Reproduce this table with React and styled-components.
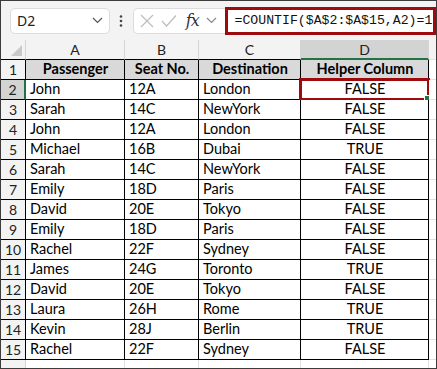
import React from 'react';
import styled, { createGlobalStyle } from 'styled-components';

const Global = createGlobalStyle`
  html, body { margin: 0; padding: 0; background: #fff; overflow: hidden; }
  * { box-sizing: border-box; }
`;

const GREEN = '#217346';
const RED = '#9e0b0f';
const CELL_FONT = `Lato, "Open Sans", sans-serif`;

const Frame = styled.div`
  width: 437px;
  height: 369px;
  border: 1px solid #3c3c3c;
  overflow: hidden;
  background: #fff;
  display: flex;
  flex-direction: column;
`;

const Toolbar = styled.div`
  height: 39px;
  flex: none;
  background: #f3f3f3;
  display: flex;
  align-items: center;
  padding-left: 9px;
`;

const NameBox = styled.div`
  width: 100px;
  height: 26px;
  background: #fff;
  border: 1px solid #dcdcdc;
  border-radius: 5px;
  display: flex;
  align-items: center;
  justify-content: space-between;
  padding: 0 6px 0 6px;
  font-family: "Noto Sans", sans-serif;
  font-size: 14px;
  color: #222;
`;

const Dots = styled.div`
  width: 23px;
  display: flex;
  justify-content: center;
  color: #444;
`;

const FormulaIcons = styled.div`
  width: 92px;
  height: 26px;
  background: #fff;
  border: 1px solid #dcdcdc;
  border-right: none;
  border-radius: 5px 0 0 5px;
  display: flex;
  align-items: center;
  padding-left: 6px;
  gap: 7px;
`;

const Fx = styled.span`
  font-family: "DejaVu Serif", "Liberation Serif", serif;
  font-style: italic;
  font-size: 16px;
  color: #333;
  letter-spacing: -1px;
  margin-left: 2px;
`;

const FormulaInput = styled.div`
  width: 212px;
  height: 28px;
  border: 3px solid ${RED};
  background: #fff;
  display: flex;
  align-items: center;
  padding-left: 7px;
  font-family: "Liberation Mono", monospace;
  font-size: 13.2px;
  color: #111;
  white-space: nowrap;
  overflow: hidden;
`;

const Sheet = styled.div`
  display: grid;
  grid-template-columns: 25px 99px 74px 102px 128px 1fr;
  grid-auto-rows: 20px;
  flex: 1;
`;

const Cell = styled.div`
  position: relative;
  border-right: 1px solid ${p => p.$rColor || '#000'};
  border-bottom: 1px solid ${p => p.$bColor || '#000'};
  background: ${p => p.$bg || '#fff'};
  font-family: ${CELL_FONT};
  font-size: 14.5px;
  font-weight: ${p => (p.$bold ? 700 : 400)};
  color: #000;
  display: flex;
  align-items: flex-end;
  padding: 0 3px 1px 4px;
  justify-content: ${p => (p.$center ? 'center' : 'flex-start')};
  white-space: nowrap;
  overflow: visible;
  line-height: 18px;
`;

const HeadCell = styled(Cell)`
  background: ${p => (p.$sel ? '#d3d3d3' : '#f3f3f3')};
  justify-content: center;
  align-items: center;
  padding: 0;
  color: #222;
  font-size: 14px;
  line-height: 20px;
`;

const ColHead = styled(HeadCell)`
  border-right-color: #d4d4d4;
  border-bottom: ${p => (p.$sel ? `2px solid ${GREEN}` : `1px solid ${p.$bColor || '#000'}`)};
  padding-top: ${p => (p.$sel ? '1px' : '0')};
`;

const RowHead = styled(HeadCell)`
  border-right: ${p => (p.$sel ? `2px solid ${GREEN}` : `1px solid ${p.$rColor || '#000'}`)};
  border-bottom-color: ${p => p.$bColor || '#000'};
`;

const Corner = styled(HeadCell)`
  border-right-color: #d4d4d4;
  &::after {
    content: '';
    position: absolute;
    right: 3px;
    bottom: 3px;
    width: 0;
    height: 0;
    border-left: 11px solid transparent;
    border-bottom: 11px solid #cacaca;
  }
`;

const Selection = styled.div`
  position: absolute;
  left: -2px;
  top: -2px;
  right: -2px;
  bottom: -2px;
  border: 3px solid ${RED};
  pointer-events: none;
  &::after {
    content: '';
    position: absolute;
    right: -4px;
    bottom: -4px;
    width: 5px;
    height: 5px;
    background: ${GREEN};
    border: 1px solid #fff;
  }
`;

const data = [
  ['John', '12A', 'London', 'FALSE'],
  ['Sarah', '14C', 'NewYork', 'FALSE'],
  ['John', '12A', 'London', 'FALSE'],
  ['Michael', '16B', 'Dubai', 'TRUE'],
  ['Sarah', '14C', 'NewYork', 'FALSE'],
  ['Emily', '18D', 'Paris', 'FALSE'],
  ['David', '20E', 'Tokyo', 'FALSE'],
  ['Emily', '18D', 'Paris', 'FALSE'],
  ['Rachel', '22F', 'Sydney', 'FALSE'],
  ['James', '24G', 'Toronto', 'TRUE'],
  ['David', '20E', 'Tokyo', 'FALSE'],
  ['Laura', '26H', 'Rome', 'TRUE'],
  ['Kevin', '28J', 'Berlin', 'TRUE'],
  ['Rachel', '22F', 'Sydney', 'FALSE'],
];

const Chevron = ({ color = '#555' }) => (
  <svg width="11" height="7" viewBox="0 0 11 7">
    <path d="M1 1 L5.5 5.5 L10 1" fill="none" stroke={color} strokeWidth="1.2" />
  </svg>
);

const LIGHT = '#e1e1e1';

export default function App() {
  return (
    <>
      <Global />
      <Frame>
        <Toolbar>
          <NameBox>
            <span>D2</span>
            <Chevron />
          </NameBox>
          <Dots>
            <svg width="4" height="12" viewBox="0 0 4 12">
              <circle cx="2" cy="1.5" r="1.3" fill="#444" />
              <circle cx="2" cy="6" r="1.3" fill="#444" />
              <circle cx="2" cy="10.5" r="1.3" fill="#444" />
            </svg>
          </Dots>
          <FormulaIcons>
            <svg width="14" height="14" viewBox="0 0 14 14">
              <path d="M1 1 L13 13 M13 1 L1 13" stroke="#bcbcbc" strokeWidth="1.2" fill="none" />
            </svg>
            <svg width="16" height="14" viewBox="0 0 16 14">
              <path d="M1 7 L5.5 12 L15 1.5" stroke="#bcbcbc" strokeWidth="1.2" fill="none" />
            </svg>
            <Fx>fx</Fx>
            <Chevron color="#888" />
          </FormulaIcons>
          <FormulaInput>=COUNTIF($A$2:$A$15,A2)=1</FormulaInput>
        </Toolbar>
        <Sheet>
          <Corner />
          {['A', 'B', 'C', 'D'].map(l => (
            <ColHead key={l} $sel={l === 'D'}>{l}</ColHead>
          ))}
          <ColHead $bColor={LIGHT} />

          <RowHead>1</RowHead>
          {['Passenger', 'Seat No.', 'Destination', 'Helper Column'].map(h => (
            <Cell key={h} $bg="#d9d9d9" $bold $center>{h}</Cell>
          ))}
          <Cell $rColor={LIGHT} $bColor={LIGHT} />

          {data.map((row, i) => {
            const n = i + 2;
            return (
              <React.Fragment key={n}>
                <RowHead $sel={n === 2}>{n}</RowHead>
                <Cell>{row[0]}</Cell>
                <Cell>{row[1]}</Cell>
                <Cell>{row[2]}</Cell>
                <Cell $center>
                  {row[3]}
                  {n === 2 && <Selection />}
                </Cell>
                <Cell $rColor={LIGHT} $bColor={LIGHT} />
              </React.Fragment>
            );
          })}

          <RowHead $bColor={LIGHT} $rColor="#d4d4d4" />
          <Cell $rColor={LIGHT} $bColor={LIGHT} />
          <Cell $rColor={LIGHT} $bColor={LIGHT} />
          <Cell $rColor={LIGHT} $bColor={LIGHT} />
          <Cell $rColor={LIGHT} $bColor={LIGHT} />
          <Cell $rColor={LIGHT} $bColor={LIGHT} />
        </Sheet>
      </Frame>
    </>
  );
}
